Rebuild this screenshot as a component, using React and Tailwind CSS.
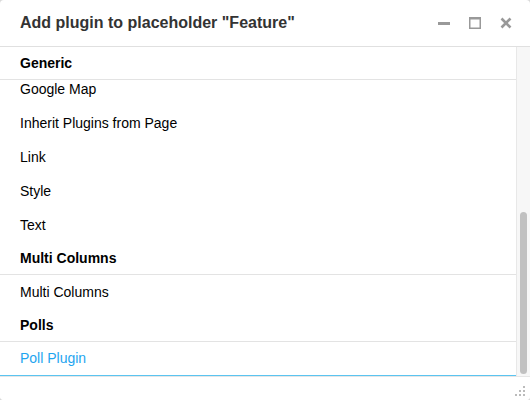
const groups = [
  { title: "Multi Columns", items: ["Multi Columns"] },
  { title: "Polls", items: ["Poll Plugin"] },
];

const generic = ["Google Map", "Inherit Plugins from Page", "Link", "Style", "Text"];

function Header({ title }) {
  return (
    <div className="flex h-[33px] items-center border-b border-[#e3e3e3] px-5 text-[14px] font-bold text-black">
      {title}
    </div>
  );
}

function Item({ label, active }) {
  return (
    <div
      className={
        active
          ? "flex h-[34px] items-center border-b border-[#5bc4f0] px-5 text-[14px] text-[#1ea5f0]"
          : "flex h-[34px] items-center px-5 text-[14px] text-black"
      }
    >
      {label}
    </div>
  );
}

export default function App() {
  return (
    <div
      className="h-[400px] w-[530px] bg-[#d9d9d9]"
      style={{ fontFamily: '"Liberation Sans", Arial, sans-serif' }}
    >
      <div className="flex h-full w-full flex-col overflow-hidden rounded-[4px] bg-white">
        {/* title bar */}
        <div className="flex h-[47px] shrink-0 items-center border-b border-[#e0e0e0] pl-5 pr-[18px]">
          <span className="flex-1 text-[16px] font-bold text-[#333]">
            Add plugin to placeholder "Feature"
          </span>
          <div className="flex items-center gap-[19px] text-[#999]">
            <svg width="12" height="12" viewBox="0 0 12 12">
              <rect x="0" y="5" width="12" height="3" fill="#999" />
            </svg>
            <svg width="12" height="12" viewBox="0 0 12 12">
              <rect x="0.75" y="0.75" width="10.5" height="10.5" fill="none" stroke="#999" strokeWidth="1.5" />
              <rect x="0" y="0" width="12" height="2.5" fill="#999" />
            </svg>
            <svg width="12" height="12" viewBox="0 0 12 12">
              <path d="M1.5 1.5 L10.5 10.5 M10.5 1.5 L1.5 10.5" stroke="#999" strokeWidth="2.6" />
            </svg>
          </div>
        </div>

        {/* body with scrollbar */}
        <div className="flex h-[329px] shrink-0">
          <div className="flex flex-1 flex-col overflow-hidden">
            <Header title="Generic" />
            <div className="flex-1 overflow-hidden">
              <div className="-mt-[8px]">
                {generic.map((g) => (
                  <Item key={g} label={g} />
                ))}
                {groups.map((g) => (
                  <div key={g.title}>
                    <Header title={g.title} />
                    {g.items.map((i) => (
                      <Item key={i} label={i} active={i === "Poll Plugin"} />
                    ))}
                  </div>
                ))}
              </div>
            </div>
          </div>
          <div className="flex w-[14px] flex-col border-l border-[#e8e8e8] bg-[#f7f7f7] px-[3px] pb-[2px] pt-[165px]">
            <div className="flex-1 rounded-full bg-[#c1c1c1]" />
          </div>
        </div>

        {/* footer */}
        <div className="flex flex-1 items-end justify-end border-t border-[#e6e6e6] bg-white pb-[3px] pr-[4px]">
          <svg width="12" height="12" viewBox="0 0 12 12">
            <rect x="9" y="1" width="2" height="2" fill="#bbb" />
            <rect x="5" y="5" width="2" height="2" fill="#bbb" />
            <rect x="9" y="5" width="2" height="2" fill="#bbb" />
            <rect x="1" y="9" width="2" height="2" fill="#bbb" />
            <rect x="5" y="9" width="2" height="2" fill="#bbb" />
            <rect x="9" y="9" width="2" height="2" fill="#bbb" />
          </svg>
        </div>
      </div>
    </div>
  );
}
